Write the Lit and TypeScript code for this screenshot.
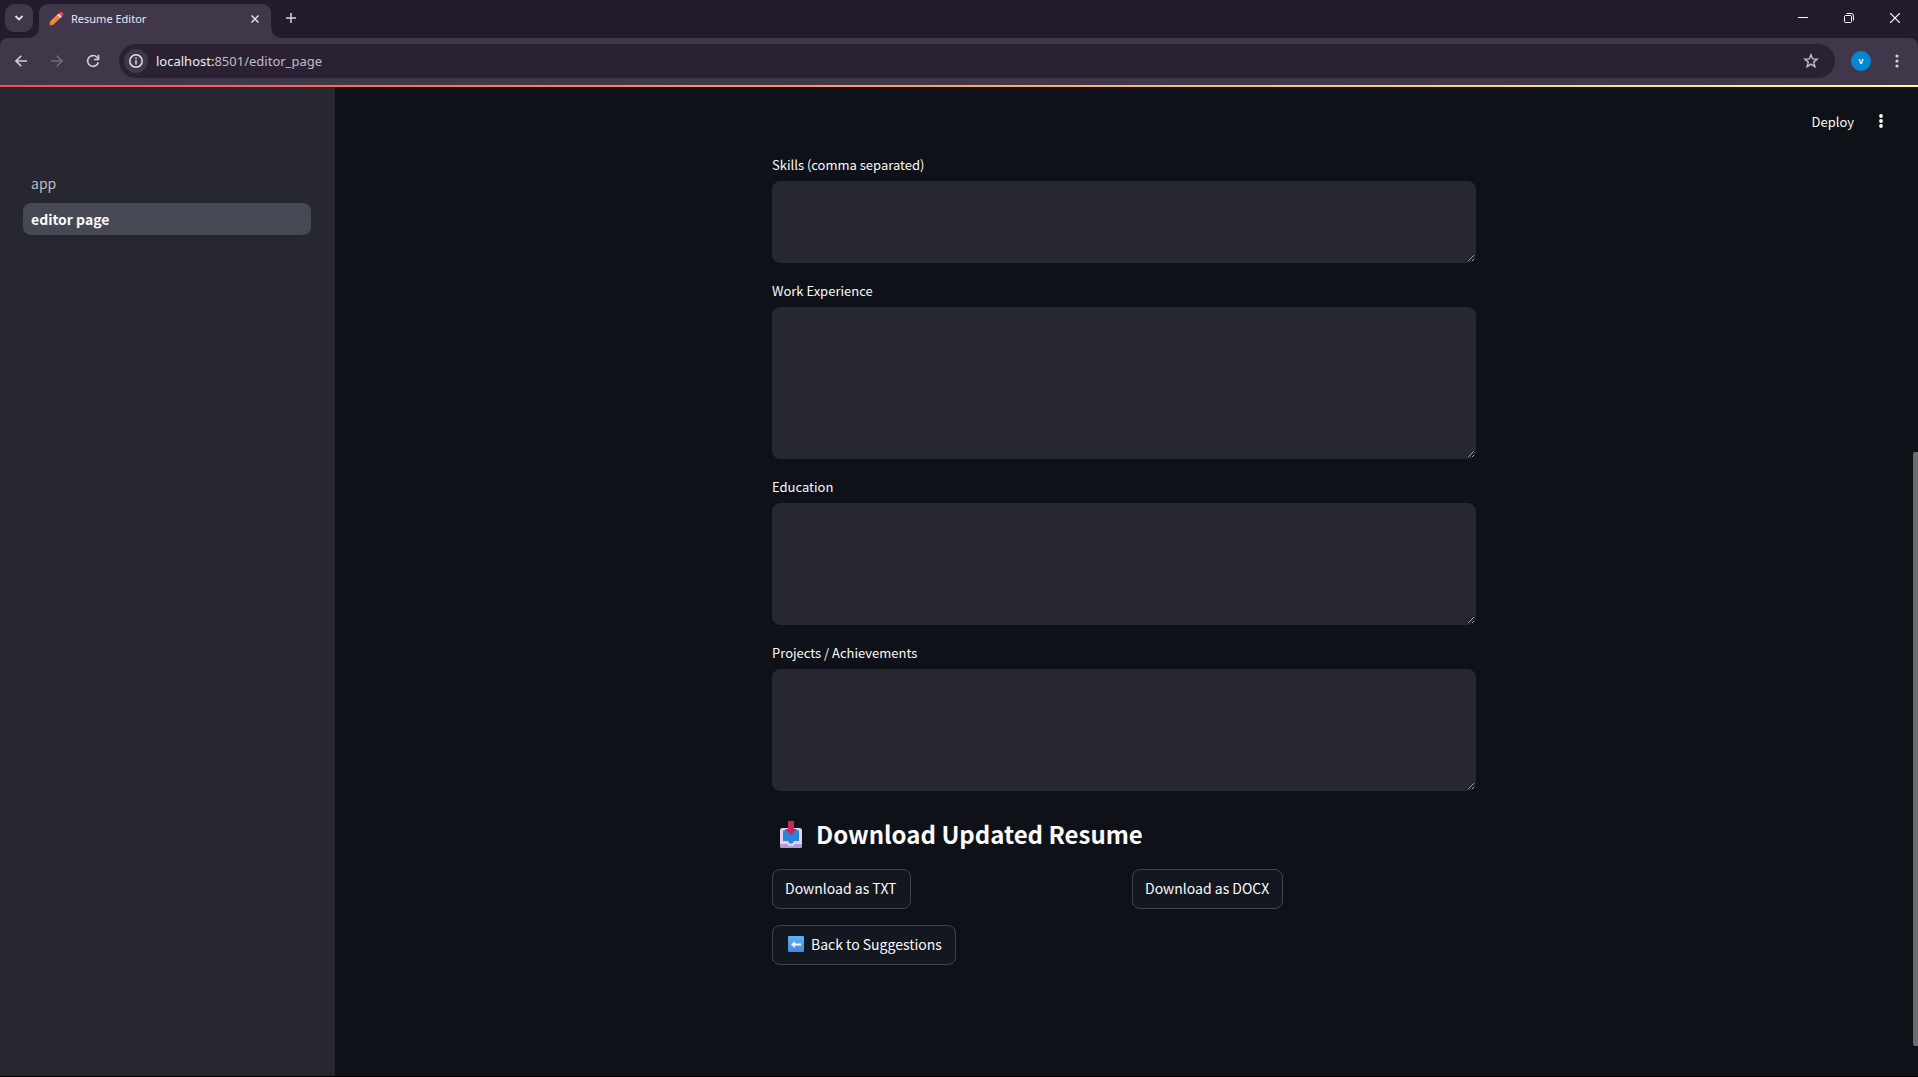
import { LitElement, html, css, svg } from "lit";
import { customElement, property } from "lit/decorators.js";

interface Field {
  id: string;
  label: string;
  height: number;
}

const FIELDS: Field[] = [
  { id: "skills", label: "Skills (comma separated)", height: 82 },
  { id: "experience", label: "Work Experience", height: 152 },
  { id: "education", label: "Education", height: 122 },
  { id: "projects", label: "Projects / Achievements", height: 122 },
];

const pencilIcon = svg`
  <defs>
    <linearGradient id="wood" x1="0" y1="0" x2="1" y2="1">
      <stop offset="0" stop-color="#ffa03c" /><stop offset="1" stop-color="#f4692a" />
    </linearGradient>
  </defs>
  <path d="M1.2 10.600 9 2.800l3.300 3.300-8 7.700-3 .6c-.5.100-.8-.3-.7-.7z" fill="url(#wood)" />
  <path d="M8.400 4 10 2.400l3 3-1.700 1.600z" fill="#cfe3f5" />
  <path d="m10 2.400 1.300-1.300c1.100-1.100 4 1.700 2.900 2.900L12.900 5.400z" fill="#f2495c" />
  <path d="m.4 13.700.4-1.500 1.500 1.600-1.200.6c-.5.100-.8-.3-.7-.7z" fill="#a8553a" />
`;

const trayIcon = svg`
  <defs>
    <linearGradient id="arrow" x1="0" y1="0" x2="1" y2="1">
      <stop offset="0" stop-color="#e0264a" /><stop offset="1" stop-color="#c2246b" />
    </linearGradient>
  </defs>
  <path d="M2.500 7h17A2.500 2.500 0 0 1 22 9.500V25a2 2 0 0 1-2 2H2a2 2 0 0 1-2-2V9.500A2.500 2.500 0 0 1 2.500 7z" fill="#dfd3e9" />
  <path d="M0 23h7l2 2h4l2-2h7v2a2 2 0 0 1-2 2H2a2 2 0 0 1-2-2z" fill="#b79ad2" />
  <path d="M4.500 9h13A1.500 1.500 0 0 1 19 10.500V20h-4.500c-.8 0-1 .5-1.200 1.200-.5 1.800-4.100 1.800-4.600 0C8.500 20.500 8.300 20 7.500 20H3v-9.500A1.500 1.500 0 0 1 4.500 9z" fill="#2b84d6" />
  <path d="M8 0h6v8h3l-6 6-6-6h3z" fill="url(#arrow)" />
`;

const backIcon = svg`
  <defs>
    <linearGradient id="tile" x1="0" y1="0" x2="0" y2="1">
      <stop offset="0" stop-color="#5cb4f8" /><stop offset="1" stop-color="#4a86e0" />
    </linearGradient>
  </defs>
  <rect width="16" height="16" rx="1" fill="url(#tile)" />
  <path d="M3 8.500 7 5v2.400h6v2.200H7V12z" fill="#f6f3ff" />
`;

@customElement("browser-bar")
export class BrowserBar extends LitElement {
  @property() heading = "";
  @property() host = "";
  @property() path = "";

  static styles = css`
    :host { display: block; font-family: "Noto Sans", "Open Sans", sans-serif; color: #e6e0e9; }
    * { box-sizing: border-box; }
    button { border: 0; padding: 0; margin: 0; background: none; color: inherit; font: inherit; display: grid; place-items: center; }
    svg { display: block; }
    .tabs { display: flex; height: 38px; background: #241b2f; padding-left: 5px; }
    .search { width: 28px; height: 28px; border-radius: 9px; background: #41374b; margin-top: 4px; }
    .tab {
      display: flex; align-items: center; width: 232px; height: 34px; margin: 4px 0 0 6px; padding: 0 8px 5px 10px;
      background: #41374b; border-radius: 9px 9px 0 0; font-size: 11px; position: relative;
    }
    .tab::before, .tab::after { content: ""; position: absolute; bottom: 0; width: 9px; height: 9px; }
    .tab::before { right: 100%; background: radial-gradient(circle at 0 0, transparent 8px, #41374b 9px); }
    .tab::after { left: 100%; background: radial-gradient(circle at 100% 0, transparent 8px, #41374b 9px); }
    .title { flex: 1; margin-left: 7px; white-space: nowrap; color: #ece6f2; }
    .square { width: 16px; height: 16px; }
    .add { width: 28px; height: 28px; margin: 4px 0 0 6px; color: #d8cfe4; }
    .window { display: flex; margin-left: auto; color: #fff; }
    .window button { width: 46px; height: 36px; }
    .toolbar { display: flex; align-items: center; height: 47px; padding: 0 5px 2px 3px; background: #41374b; border-radius: 8px 8px 0 0; }
    .frame { background: #241b2f; }
    .nav { width: 36px; height: 34px; color: #d5cadf; }
    .off { color: #76697f; }
    .address { display: flex; align-items: center; flex: 1; height: 34px; margin-left: 8px; padding: 0 16px 0 5px; border-radius: 17px; background: #2a2133; }
    .info { width: 24px; height: 24px; border-radius: 50%; background: #41374b; }
    .url { flex: 1; margin-left: 8px; font-size: 13px; color: #c3bbcb; white-space: nowrap; }
    .url b { font-weight: 400; color: #f1ecf6; }
    .avatar { width: 20px; height: 20px; margin: 0 16px; border-radius: 50%; background: #0288d1; color: #fff; font-size: 9px; font-weight: 600; }
    .more { width: 20px; height: 28px; margin-right: 6px; color: #d5cadf; }
  `;

  render() {
    return html`
      <div class="tabs">
        <button class="search" aria-label="Search tabs">
          <svg width="10" height="10" viewBox="0 0 10 10" fill="none" stroke="currentColor" stroke-width="1.8"><path d="m1.500 3 3.500 3.500L8.500 3" /></svg>
        </button>
        <div class="tab">
          <svg width="15" height="15" viewBox="0 0 15 15">${pencilIcon}</svg>
          <span class="title">${this.heading}</span>
          <button class="square" aria-label="Close tab">
            <svg width="8" height="8" viewBox="0 0 8 8" stroke="currentColor" stroke-width="1.500"><path d="m.5.5 7 7m0-7-7 7" /></svg>
          </button>
        </div>
        <button class="add" aria-label="New tab">
          <svg width="10" height="10" viewBox="0 0 10 10" stroke="currentColor" stroke-width="1.500"><path d="M5 0v10M0 5h10" /></svg>
        </button>
        <div class="window">
          <button aria-label="Minimize"><svg width="10" height="10" viewBox="0 0 10 10" stroke="currentColor"><path d="M0 4.500h10" /></svg></button>
          <button aria-label="Restore">
            <svg width="10" height="10" viewBox="0 0 10 10" fill="none" stroke="currentColor"><rect x=".5" y="2.500" width="7" height="7" rx="1" /><path d="M2.500.5H7A2.500 2.500 0 0 1 9.500 3v4.500" /></svg>
          </button>
          <button aria-label="Close"><svg width="10" height="10" viewBox="0 0 10 10" stroke="currentColor" stroke-width="1.200"><path d="m0 0 10 10M10 0 0 10" /></svg></button>
        </div>
      </div>
      <div class="frame">
        <div class="toolbar">
          <button class="nav" aria-label="Back">
            <svg width="12" height="12" viewBox="0 0 12 12" fill="none" stroke="currentColor" stroke-width="1.600"><path d="M12 6H1M6.300.7 1 6l5.300 5.300" /></svg>
          </button>
          <button class="nav off" aria-label="Forward">
            <svg width="12" height="12" viewBox="0 0 12 12" fill="none" stroke="currentColor" stroke-width="1.600"><path d="M0 6h11M5.700.7 11 6l-5.300 5.300" /></svg>
          </button>
          <button class="nav" aria-label="Reload">
            <svg width="14" height="14" viewBox="0 0 14 14" fill="none" stroke="currentColor" stroke-width="1.600"><path d="M12.300 8.200A5.400 5.400 0 1 1 11 3.300L12.600 5" /><path d="M12.500.8v4.700H8" /></svg>
          </button>
          <div class="address">
            <button class="info" aria-label="Site information">
              <svg width="14" height="14" viewBox="0 0 14 14" fill="none" stroke="currentColor" stroke-width="1.500"><circle cx="7" cy="7" r="6.200" /><path d="M7 6.200v4.200M7 3.500V5" /></svg>
            </button>
            <span class="url"><b>${this.host}</b>${this.path}</span>
            <button class="square" aria-label="Bookmark this page">
              <svg width="16" height="16" viewBox="0 0 16 16" fill="none" stroke="#c9c0d2" stroke-width="1.400"><path d="m8 1.700 1.700 4.200 4.500.3-3.500 2.900 1.200 4.500L8 11.100l-3.900 2.500 1.200-4.500L1.800 6.200l4.500-.3z" /></svg>
            </button>
          </div>
          <button class="avatar" aria-label="Profile">v</button>
          <button class="more" aria-label="Browser menu">
            <svg width="4" height="14" viewBox="0 0 4 14" fill="currentColor"><circle cx="2" cy="2" r="1.600" /><circle cx="2" cy="7" r="1.600" /><circle cx="2" cy="12" r="1.600" /></svg>
          </button>
        </div>
      </div>
    `;
  }
}

@customElement("app-root")
export class AppRoot extends LitElement {
  static styles = css`
    :host {
      display: flex; flex-direction: column; min-height: 100vh; box-sizing: border-box;
      background: #0e1117; border-bottom: 1px solid #000; color: #fafafa;
      font-family: "Noto Sans CJK JP", "Noto Sans", sans-serif;
    }
    * { box-sizing: border-box; }
    .accent { height: 2px; background: linear-gradient(90deg, #ff4b4b, #fffd80); }
    .shell { display: flex; flex: 1; }
    .sidebar { flex: 0 0 335px; background: #262730; padding: 80px 24px 0 23px; }
    .links { display: flex; flex-direction: column; gap: 4px; }
    .link { padding: 0 8px; border-radius: 8px; font-size: 14px; line-height: 32px; color: #bcbdc2; text-decoration: none; }
    .current { background: #464853; color: #fafafa; font-weight: 700; }
    .main { flex: 1; min-width: 0; }
    .header { display: flex; justify-content: flex-end; align-items: center; height: 66px; padding: 2px 17px 0 0; }
    .plain { border: 0; background: none; color: inherit; font: inherit; font-size: 13px; padding: 0 12px; height: 28px; display: grid; place-items: center; }
    .content { display: flex; flex-direction: column; gap: 16px; max-width: 704px; margin: 0 auto; padding-bottom: 80px; }
    .field { display: flex; flex-direction: column; gap: 4px; }
    label { font-size: 13px; line-height: 24px; }
    textarea {
      display: block; width: 100%; margin: 0; border: 1px solid #262730; border-radius: 8px; background: #262730;
      color: #fafafa; font: inherit; padding: 12px; resize: vertical; outline: none; color-scheme: dark;
    }
    h2 { display: flex; align-items: center; gap: 14px; margin: 0; padding: 10px 0 2px 8px; font-size: 24px; font-weight: 700; line-height: 34px; }
    .pair { display: grid; grid-template-columns: 1fr 1fr; gap: 16px; }
    .button {
      display: flex; align-items: center; gap: 7px; justify-self: start; align-self: flex-start; height: 40px; padding: 0 13px 2px 12px;
      border: 1px solid #41444c; border-radius: 8px; background: #131720; color: inherit; font: inherit; font-size: 14px; white-space: nowrap;
    }
    .back { padding-left: 15px; }
    .rail { flex: 0 0 5px; display: grid; grid-template-rows: 365fr 594fr 30fr; }
    .thumb { grid-row: 2; background: #6b6c70; border-radius: 2px 0 0 2px; }
    svg { display: block; flex: none; }
  `;

  render() {
    return html`
      <browser-bar heading="Resume Editor" host="localhost:" path="8501/editor_page"></browser-bar>
      <div class="accent"></div>
      <div class="shell">
        <aside class="sidebar">
          <nav class="links">
            <a class="link" href="#app">app</a>
            <a class="link current" href="#editor_page" aria-current="page">editor page</a>
          </nav>
        </aside>
        <main class="main">
          <header class="header">
            <button class="plain">Deploy</button>
            <button class="plain" aria-label="Main menu">
              <svg width="6" height="16" viewBox="0 0 6 16" fill="currentColor"><circle cx="3" cy="3" r="1.900" /><circle cx="3" cy="8" r="1.900" /><circle cx="3" cy="13" r="1.900" /></svg>
            </button>
          </header>
          <div class="content">
            ${FIELDS.map(
              (f) => html`<div class="field">
                <label for=${f.id}>${f.label}</label>
                <textarea id=${f.id} style="height:${f.height}px"></textarea>
              </div>`
            )}
            <h2><svg width="22" height="27" viewBox="0 0 22 27">${trayIcon}</svg>Download Updated Resume</h2>
            <div class="pair">
              <button class="button">Download as TXT</button>
              <button class="button">Download as DOCX</button>
            </div>
            <button class="button back"><svg width="16" height="16" viewBox="0 0 16 16">${backIcon}</svg>Back to Suggestions</button>
          </div>
        </main>
        <div class="rail"><div class="thumb"></div></div>
      </div>
    `;
  }
}
